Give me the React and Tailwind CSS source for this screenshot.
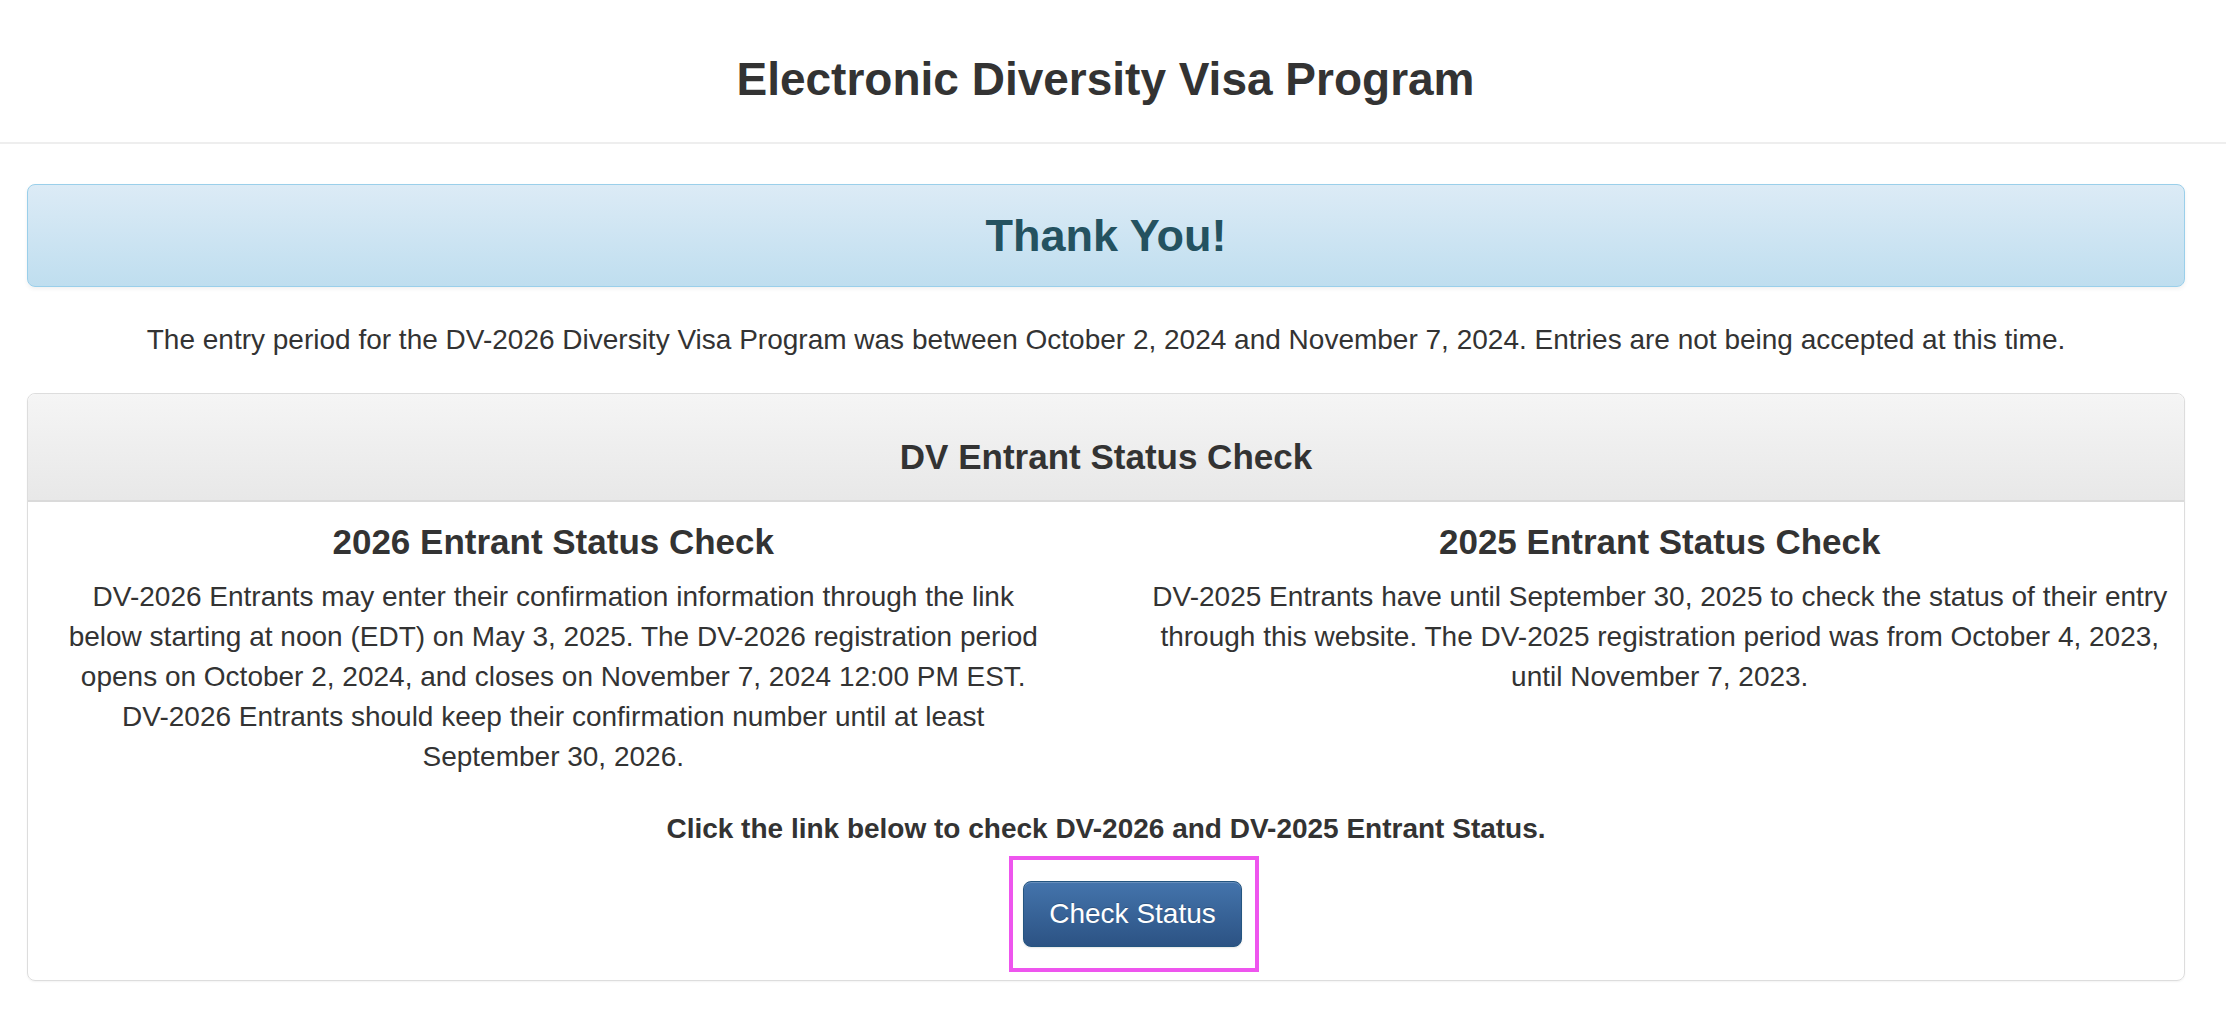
import React from 'react';

const App = () => {
  return (
    <div className="min-h-screen bg-white text-[#333333] font-['Liberation_Sans','Helvetica_Neue',Arial,sans-serif]">
      {/* Page header */}
      <div className="pt-[56px] pb-[40px] pr-[15px] border-b-2 border-[#eeeeee] text-center">
        <h1 className="text-[46px] leading-none font-bold">Electronic Diversity Visa Program</h1>
      </div>

      <div className="pl-[27px] pr-[41px]">
        {/* Alert */}
        <div className="mt-[40px] h-[103px] flex items-center justify-center rounded-[8px] border border-[#9acfea] bg-gradient-to-b from-[#dcebf6] to-[#bfdeef] shadow-[0_2px_4px_rgba(0,0,0,0.06)]">
          <h3 className="text-[45px] leading-none font-bold text-[#245260]">Thank You!</h3>
        </div>

        <p className="mt-[33px] text-center text-[28px] leading-[40px]">
          The entry period for the DV-2026 Diversity Visa Program was between October 2, 2024 and November 7, 2024. Entries are not being accepted at this time.
        </p>

        {/* Status panel */}
        <div className="mt-[33px] rounded-[8px] border border-[#dddddd] shadow-[0_1px_2px_rgba(0,0,0,0.05)]">
          <div className="pt-[45px] pb-[26px] text-center rounded-t-[8px] border-b-2 border-[#dadada] bg-gradient-to-b from-[#f5f5f5] to-[#e8e8e8]">
            <h4 className="text-[35px] leading-none font-bold">DV Entrant Status Check</h4>
          </div>

          <div className="pt-[22px] pb-[8px]">
            <div className="grid grid-cols-2 -ml-[28px] -mr-[29px] text-center">
              <div className="px-[30px]">
                <h4 className="text-[35px] leading-none font-bold">2026 Entrant Status Check</h4>
                <p className="mt-[18px] px-[28px] text-[28px] leading-[40px]">
                  DV-2026 Entrants may enter their confirmation information through the link below starting at noon (EDT) on May 3, 2025. The DV-2026 registration period opens on October 2, 2024, and closes on November 7, 2024 12:00 PM EST. DV-2026 Entrants should keep their confirmation number until at least September 30, 2026.
                </p>
              </div>
              <div className="px-[30px]">
                <h4 className="text-[35px] leading-none font-bold">2025 Entrant Status Check</h4>
                <p className="mt-[18px] text-[28px] leading-[40px]">
                  DV-2025 Entrants have until September 30, 2025 to check the status of their entry through this website. The DV-2025 registration period was from October 4, 2023, until November 7, 2023.
                </p>
              </div>
            </div>

            <p className="mt-[32px] text-center text-[28px] leading-[40px] font-bold">
              Click the link below to check DV-2026 and DV-2025 Entrant Status.
            </p>

            <div className="mt-[7px] flex justify-center">
              <div className="ml-[56px] border-4 border-[#ee55ee] pt-[21px] pb-[21px] pl-[10px] pr-[13px]">
                <button className="px-[25px] py-[12px] text-[28px] leading-[40px] text-white rounded-[8px] border border-[#245580] bg-gradient-to-b from-[#4474ac] to-[#2c5384] shadow-[inset_0_1px_0_rgba(255,255,255,0.2),0_1px_2px_rgba(0,0,0,0.1)] [text-shadow:0_-1px_0_rgba(0,0,0,0.2)]">
                  Check Status
                </button>
              </div>
            </div>
          </div>
        </div>
      </div>
    </div>
  );
};

export default App;
